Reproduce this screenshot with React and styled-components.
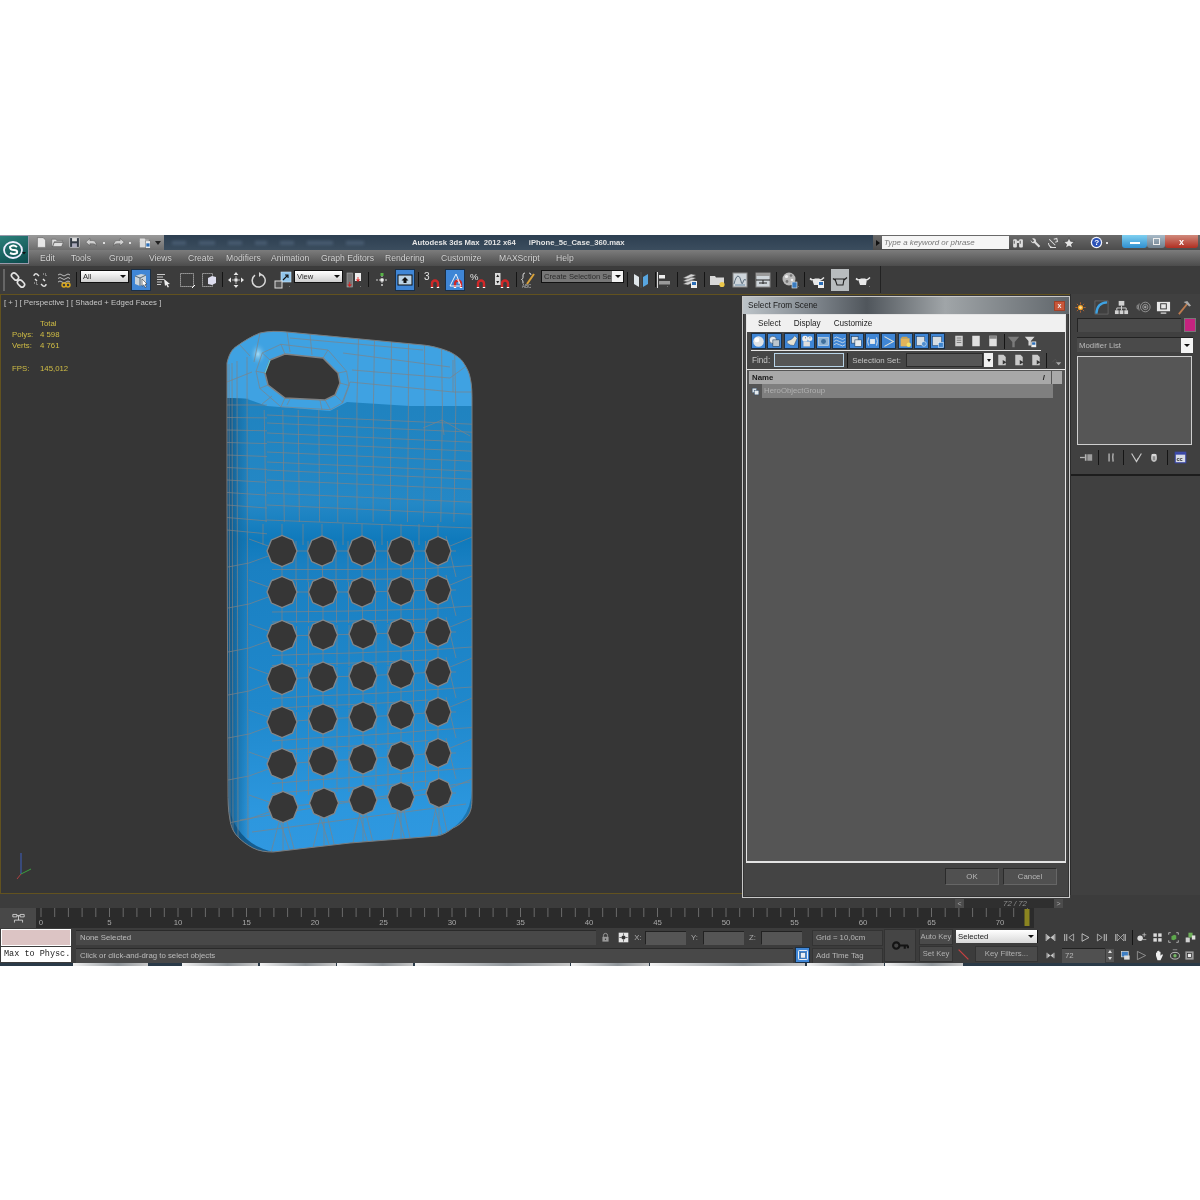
import React from "react";
import styled, { createGlobalStyle } from "styled-components";

const Global = createGlobalStyle`
  html, body { margin: 0; background: #fff; }
  * { box-sizing: border-box; }
`;
const UI = `"Liberation Sans", "Noto Sans", sans-serif`;

const Page = styled.div`
  width: 1200px; height: 1200px; padding-top: 235px; background: #fff; overflow: hidden;
  font-family: ${UI}; font-size: 7.8px; color: #c4c4c4; white-space: nowrap;
`;
const AppFrame = styled.div`
  position: relative; width: 1200px; height: 731px; display: flex; flex-direction: column; background: #3c3c3c;
  filter: blur(0.4px);
`;

/* ---------- icons ---------- */
const W = "#e4e4e4";
const magnet = <g fill="none"><path d="M8 15v-3.500a3 3 0 0 1 6 0V15" stroke="#d02828" strokeWidth="2.400" /><path d="M6.800 15.500h2.400M12.800 15.500h2.400" stroke="#fff" strokeWidth="1.200" /></g>;
const teapot = <g><path d="M3 7h9l-1 6H5z" fill="#e8e8e8" /><path d="M12 8l3-2.500M3 8L1 6.500" stroke="#e8e8e8" strokeWidth="1.600" fill="none" /><path d="M5.500 6.500h5" stroke="#999" /></g>;
const ICONS = {
  link: <g fill="none" stroke={W} strokeWidth="1.600"><rect x="1" y="2" width="8" height="5" rx="2.500" transform="rotate(45 5 4.500)" /><rect x="7" y="9" width="8" height="5" rx="2.500" transform="rotate(45 11 11.500)" /></g>,
  unlink: <g fill="none" stroke={W} strokeWidth="1.400"><path d="M2 4a2 2 0 0 1 3-2l2 2M5 9L3 7" /><path d="M14 12a2 2 0 0 1-3 2l-2-2M11 7l2 2" /><path d="M11 2h3v3M2 11h3v3" stroke="#999" strokeDasharray="1 1" /></g>,
  bind: <g fill="none"><path d="M2 3q2-2 4 0t4 0 4 0M2 6.500q2-2 4 0t4 0 4 0M2 10q2-2 4 0t4 0 4 0" stroke="#bbb" strokeWidth="1" /><circle cx="8" cy="13" r="2" stroke="#d8a820" strokeWidth="1.400" /><circle cx="12" cy="13" r="2" stroke="#d8a820" strokeWidth="1.400" /></g>,
  selObj: <g><path d="M2 4l6-2 5 1v8l-6 3-5-2z" fill="#c9d4dc" /><path d="M2 4l5 2 6-3M7 6v8" stroke="#4b5b66" strokeWidth=".9" fill="none" /><path d="M9 7l5 5-2 .3 1.400 2.700-1.300.6-1.300-2.700-1.600 1.400z" fill="#fff" stroke="#222" strokeWidth=".5" /></g>,
  selName: <g><path d="M1 2.500h8M1 5h6M1 7.500h7M1 10h5M1 12.500h4" stroke="#c9c9c9" strokeWidth="1.200" /><path d="M8 7l6 5-2.400.3 1.400 2.700-1.300.6-1.400-2.800L9 14z" fill="#eee" /></g>,
  rect: <g><rect x="1.500" y="1.500" width="13" height="13" fill="none" stroke="#bbb" strokeDasharray="1.200 .8" /><path d="M13 16l3-3" stroke="#fff" /></g>,
  win: <g><rect x="1.500" y="1.500" width="10" height="13" fill="none" stroke="#bbb" strokeDasharray="1.200 .8" /><path d="M7 6l4-2 4 1v6l-4 2-4-1z" fill="#dde" /></g>,
  move: <g fill="#e6e6e6"><path d="M8 0l2.400 3H5.600zM8 16l2.400-3H5.600zM0 8l3-2.400v4.800zM16 8l-3-2.400v4.800z" /><rect x="6.500" y="6.500" width="3" height="3" /><path d="M8 4v8M4 8h8" stroke="#e6e6e6" strokeWidth=".7" /></g>,
  rotate: <g fill="none" stroke="#d8d8d8" strokeWidth="1.500"><path d="M9.500 2.300A6.500 6.500 0 1 1 4 3.200" /><path d="M8 0v5L11 2.500z" fill="#d8d8d8" stroke="none" /></g>,
  scale: <g><rect x="6" y="0" width="10" height="10" fill="#8fc4ea" stroke="#cfe6f7" strokeWidth=".6" /><rect x="0" y="9" width="7" height="7" fill="#555" stroke="#ddd" /><path d="M8 8l5-5M10 3h3v3" stroke="#111" strokeWidth="1.100" fill="none" /></g>,
  pivot: <g><rect x="1" y="1" width="5.500" height="14" fill="#777" stroke="#aaa" strokeWidth=".6" /><rect x="9" y="1" width="6" height="8" fill="#eee" /><path d="M3.700 10v4M2 12.500l1.700 2 1.700-2M12 5v4M10.400 7.500l1.600 2 1.600-2" stroke="#e02020" fill="#e02020" strokeWidth=".8" /></g>,
  manip: <g><path d="M8 3v10M2 8h12" stroke="#ccc" strokeDasharray="2 1" /><rect x="6.500" y="1" width="3" height="3" fill="#59b548" /><rect x="6.500" y="6.500" width="3" height="3" fill="#eee" /><path d="M7 12h2v2H7z" fill="#aaa" /></g>,
  kb: <g><rect x="1" y="3" width="14" height="10" fill="#bcd4e6" stroke="#111" /><path d="M8 5l3.500 3.500H9.500V11h-3V8.500H4.500z" fill="#111" /></g>,
  snap3: <g>{magnet}<text x="0" y="8" fontSize="10" fill="#e4e4e4" fontFamily="Liberation Sans">3</text></g>,
  angle: <g>{magnet}<path d="M3 14L9 2l5 12H3" fill="none" stroke="#fff" strokeWidth=".9" /><path d="M9.500 7a6 6 0 0 1 2.500 5" stroke="#fff" fill="none" strokeWidth=".7" /></g>,
  pct: <g>{magnet}<text x="0" y="8" fontSize="9.500" fill="#e4e4e4" fontFamily="Liberation Sans">%</text></g>,
  spin: <g>{magnet}<rect x="1" y="1" width="5.500" height="12" fill="#dcdcdc" /><path d="M2.200 5l1.500-2.500L5.300 5zM2.200 9l1.500 2.500L5.300 9z" fill="#222" /></g>,
  named: <g fill="none" stroke="#d8d8d8"><path d="M5 1Q3 1 3 3v2.500Q3 7 1.500 7.500 3 8 3 10v1.500" /><path d="M9 1q2 0 2 2" /><path d="M7 12L14 2" stroke="#d9a23a" strokeWidth="2" /><text x="2" y="16" fontSize="4.500" fill="#bbb" stroke="none" fontFamily="Liberation Sans">ABC</text></g>,
  mirror: <g><path d="M1 2l5 3v10l-5-3z" fill="#dfe6ea" /><path d="M15 2l-5 3v10l5-3z" fill="#58a6e0" /><path d="M8 0v16" stroke="#555" /></g>,
  align: <g><path d="M1.500 0v16" stroke="#ddd" /><rect x="3" y="3" width="6" height="3.500" fill="#eee" /><rect x="3" y="9" width="11" height="3.500" fill="#9a9a9a" /></g>,
  layers: <g><path d="M1 6l8-4 5 1-8 4zM1 9l8-4 5 1-8 4zM1 12l8-4 5 1-8 4z" fill="#d6d6d6" stroke="#444" strokeWidth=".4" /><rect x="9" y="9" width="6" height="7" fill="#eee" /><rect x="10" y="10" width="4" height="3" fill="#2c6fb8" /></g>,
  folder: <g><path d="M1 4h5l1 1.500h8V13H1z" fill="#d8d8d8" /><circle cx="13" cy="12.500" r="2.600" fill="#ecc84a" /></g>,
  curve: <g><rect x="1" y="1" width="14" height="14" fill="#cfd6db" stroke="#888" /><path d="M2 12q2-8 4-8t3 5 2 1 3-2" stroke="#5b6d7c" fill="none" /><path d="M3 13h10" stroke="#6c8ca6" /></g>,
  schem: <g><rect x="1" y="1" width="14" height="14" fill="#cfd6db" stroke="#888" /><rect x="1" y="1" width="14" height="3" fill="#9a9a9a" /><path d="M1 8h14M4 11h8M8 8v4" stroke="#222" /></g>,
  mat: <g><circle cx="7" cy="7" r="6.500" fill="#b9b9b9" /><circle cx="4.500" cy="4.500" r="1.600" fill="#eee" /><circle cx="9" cy="3.500" r="1.300" fill="#777" /><circle cx="10" cy="8" r="1.300" fill="#eee" /><circle cx="5" cy="9.500" r="1.400" fill="#777" /><rect x="10" y="10" width="5" height="6" fill="#3a7cc0" stroke="#eee" strokeWidth=".6" /></g>,
  rsetup: <g>{teapot}<rect x="9" y="9" width="6" height="7" fill="#eee" /><rect x="10" y="10" width="4" height="3" fill="#2c6fb8" /></g>,
  pot: teapot,
  potDark: <g><path d="M3 7h9l-1 6H5z" fill="none" stroke="#222" strokeWidth="1.100" /><path d="M12 8l3-2.500M3 8L1 6.500" stroke="#222" strokeWidth="1.300" fill="none" /></g>,
  qnew: <path d="M3 2h7l3 3v9H3z" fill="#e6e6e6" stroke="#555" strokeWidth=".6" />,
  qopen: <path d="M1 4h5l1 1.500h7V7H4l-2 6H1zM4 8h11l-2 5H2z" fill="#ddd" stroke="#444" strokeWidth=".5" />,
  qsave: <g><rect x="2" y="2" width="12" height="12" rx="1" fill="#333a44" stroke="#d0d0d0" /><rect x="5" y="2.500" width="6" height="4" fill="#e0e0e0" /><rect x="5" y="9" width="6" height="5" fill="#aab" /></g>,
  qundo: <path d="M6 3L1 7.500 6 12V9.500h4q3 0 4 3 0-7-5-7H6z" fill="#cfcfcf" stroke="#444" strokeWidth=".5" />,
  qredo: <path d="M10 3l5 4.500L10 12V9.500H6q-3 0-4 3 0-7 5-7h3z" fill="#cfcfcf" stroke="#444" strokeWidth=".5" />,
  qproj: <g><path d="M1 3h6l1 1.500h4V7H1z" fill="#ddd" /><rect x="1" y="6" width="9" height="8" fill="#d8d8d8" /><rect x="8" y="6" width="6" height="9" fill="#eee" stroke="#444" strokeWidth=".5" /><rect x="9" y="9" width="4" height="4" fill="#2c6fb8" /></g>,
  bino: <g fill="#dedede"><rect x="1.500" y="3" width="5" height="11" rx="1.500" /><rect x="9.500" y="3" width="5" height="11" rx="1.500" /><rect x="6" y="5" width="4" height="3" /><path d="M3 5v4M11 5v4" stroke="#333" /></g>,
  wrench: <path d="M2 4l3 3 2-2-3-3q4-1.500 5 1.500t0 2.500l6 6-2 2-6-6Q3 9 2 4z" fill="#dcdcdc" />,
  sat: <g fill="none" stroke="#ddd" strokeWidth="1.400"><path d="M3 3l8 8M2 8a6 6 0 0 0 7 6" /><path d="M9 3l4-1 1 4-3 1" /><path d="M4 14h8" /></g>,
  star: <path d="M8 1l2.100 4.700 5 .5-3.800 3.300 1.100 5L8 12l-4.400 2.500 1.100-5L.9 6.200l5-.5z" fill="#e4e4e4" stroke="#333" strokeWidth=".8" />,
  help: <g><circle cx="8" cy="8" r="7" fill="#f4f6fb" /><circle cx="8" cy="8" r="5.500" fill="#2b52b8" /><text x="5.300" y="11.500" fontSize="10" fontWeight="700" fill="#fff" fontFamily="Liberation Sans">?</text></g>,
  ball: <g><circle cx="8" cy="8" r="6.500" fill="#dfe3e6" /><circle cx="6" cy="6" r="3" fill="#fff" /></g>,
  dShape: <g><circle cx="6" cy="6" r="4.500" fill="#e6eaee" stroke="#1b3a5c" strokeWidth=".7" /><rect x="6" y="6" width="8" height="8" fill="#bcc6ce" stroke="#1b3a5c" strokeWidth=".7" /></g>,
  dLight: <path d="M12 1l3 3-4 9q-5 0-8-3-1-1 0-3 5 0 9-6z" fill="#e6e3d4" stroke="#1b3a5c" strokeWidth=".5" />,
  dCam: <g><circle cx="5" cy="4.500" r="3.500" fill="#eee" /><circle cx="11" cy="4.500" r="3" fill="#eee" /><rect x="3" y="8" width="8" height="6" fill="#dedede" /><path d="M5 3.500h1M10.500 3.500h1" stroke="#123" /></g>,
  dHelper: <g><rect x="2" y="3" width="12" height="10" fill="#8fb3d4" stroke="#d6dde2" strokeWidth=".8" /><circle cx="8" cy="8" r="3" fill="#3f6f9c" /></g>,
  dWave: <path d="M1 4q3-3 7 0t7 0M1 8q3-3 7 0t7 0M1 12q3-3 7 0t7 0" fill="none" stroke="#d7e0e6" strokeWidth="1" />,
  dGroup: <g><rect x="2" y="2" width="8" height="8" fill="#d6dde2" stroke="#1b3a5c" strokeWidth=".7" /><rect x="6" y="6" width="8" height="8" fill="#e6ebee" stroke="#1b3a5c" strokeWidth=".7" /></g>,
  dXref: <g><path d="M3 3q-2 5 0 10M13 3q2 5 0 10" fill="none" stroke="#d6dde2" strokeWidth="1.200" /><rect x="5" y="5" width="6" height="6" fill="#e6ebee" /></g>,
  dBone: <path d="M3 2l11 6-11 6" fill="none" stroke="#e2e2d8" strokeWidth="1.300" />,
  dCont: <g><rect x="2" y="4" width="11" height="10" fill="#e3b45a" /><circle cx="12" cy="12" r="2.700" fill="#f2e06a" /><path d="M2 4l2-2h6l1 2" fill="#cfa24a" /></g>,
  dFolderB: <g><rect x="2" y="2" width="10" height="11" fill="#d6dde2" stroke="#1b3a5c" strokeWidth=".6" /><circle cx="11" cy="11" r="3" fill="#4e8dcf" stroke="#fff" strokeWidth=".6" /></g>,
  dFrame: <g><rect x="2" y="2" width="11" height="11" fill="#d6dde2" stroke="#1b3a5c" strokeWidth=".6" /><rect x="9" y="9" width="6" height="6" fill="#3f86cf" stroke="#fff" strokeWidth=".6" /></g>,
  page1: <g><rect x="3" y="1" width="10" height="14" fill="#cfcfcf" /><path d="M5 4h6M5 7h6M5 10h6" stroke="#666" /></g>,
  page2: <rect x="3" y="1" width="10" height="14" fill="#e0e0e0" />,
  page3: <g><rect x="3" y="1" width="10" height="14" fill="#e0e0e0" /><rect x="3" y="1" width="10" height="4" fill="#888" /></g>,
  funnel: <path d="M1 2h14L9.500 8.500V15h-3V8.500z" fill="#7b7b7b" />,
  funnel2: <g><path d="M1 2h12L8.500 7.500V13h-3V7.500z" fill="#d8d8d8" /><rect x="9" y="8" width="6" height="7" fill="#eee" /><rect x="10" y="9" width="4" height="3" fill="#2c6fb8" /></g>,
  sel1: <g><path d="M3 1h7l3 3v11H3z" fill="#c9c9c9" /><path d="M9 8l5 3-5 3z" fill="#333" /></g>,
  ddSmall: <g><path d="M3 11l4-4 2 2-2 4" stroke="#555" fill="none" /><path d="M8 11h7l-3.500 4z" fill="#aaa" /></g>,
  sun: <g><circle cx="8" cy="8" r="3.800" fill="#f0a020" /><circle cx="8" cy="8" r="2" fill="#fbe09a" /><path d="M8 .5v3M8 12.500v3M.5 8h3M12.500 8h3M2.700 2.700l2 2M11.300 11.300l2 2M2.700 13.300l2-2M11.300 4.700l2-2" stroke="#e0702a" /></g>,
  tCurve: <g><rect x="1" y="1" width="14" height="14" fill="none" stroke="#777" strokeWidth=".6" /><path d="M2.500 14.500Q3 3 14 2.500" fill="none" stroke="#3fa3e3" strokeWidth="2.400" /></g>,
  tTree: <g fill="#d2d2d2"><rect x="5" y="1" width="6" height="5" /><rect x="1" y="11" width="4" height="4" /><rect x="6" y="11" width="4" height="4" /><rect x="11" y="11" width="4" height="4" /><path d="M3 11V8.500h10V11M8 6v5" stroke="#d2d2d2" fill="none" /></g>,
  tMotion: <g fill="none" stroke="#9c9c9c"><circle cx="9.500" cy="8" r="5.500" /><circle cx="9.500" cy="8" r="3" /><circle cx="9.500" cy="8" r="1" fill="#ccc" /><path d="M2.500 4q-2 4 0 8M.5 5.500q-1 2.500 0 5" /></g>,
  tDisp: <g><rect x="1" y="2" width="14" height="10" fill="#e8e8e8" /><rect x="5" y="4" width="6" height="5.500" fill="none" stroke="#333" /><path d="M5 14h6" stroke="#ccc" strokeWidth="1.500" /></g>,
  tHammer: <g><path d="M2 15L11 4" stroke="#bc7a4e" strokeWidth="2" /><path d="M7 2l4-1 4 5-2 1-3-3z" fill="#a9a9a9" /></g>,
  pin: <g fill="#b4b4b4"><path d="M0 8h6" stroke="#b4b4b4" strokeWidth="1.600" /><rect x="6" y="4" width="2" height="8" /><rect x="9" y="4" width="6" height="8" opacity=".8" /></g>,
  bars: <g stroke="#bbb" strokeWidth="1.600" fill="none"><path d="M5 3v10M10 3q-1 5 0 10" /></g>,
  vee: <path d="M2 3l6 10 6-10M8 13l2-4" fill="none" stroke="#c8c8c8" strokeWidth="1.400" />,
  hand2: <g><ellipse cx="8" cy="9" rx="4" ry="5.500" fill="#bdbdbd" /><path d="M5 4h6v3H5z" fill="#d8d8d8" /><path d="M8 7v5" stroke="#444" /></g>,
  cfg: <g><rect x="1.500" y="1.500" width="13" height="13" fill="#d8dce6" stroke="#3846a8" strokeWidth="1.300" /><rect x="1.500" y="1.500" width="13" height="3" fill="#3846a8" /><text x="3" y="12" fontSize="7" fontWeight="700" fill="#222" fontFamily="Liberation Sans">cc</text></g>,
  tl: <g fill="none" stroke="#ddd"><path d="M1 3h5v3H1zM10 3h5v3h-5zM6 4.500h4M8 4.500V10M3 10h10M3 10v3M13 10v3" /></g>,
  lock: <g><path d="M5 7V5a3 3 0 0 1 6 0v2" fill="none" stroke="#999" strokeWidth="1.400" /><rect x="3.500" y="7" width="9" height="7" fill="#999" /><circle cx="8" cy="10.500" r="1" fill="#333" /></g>,
  abs: <g><rect x="1" y="1" width="14" height="14" fill="#e6e6e6" /><circle cx="8" cy="8" r="3" fill="#333" /><path d="M8 2v3M8 11v3M2 8h3M11 8h3" stroke="#333" /></g>,
  timeTag: <g><rect x="2" y="2" width="12" height="12" rx="1" fill="none" stroke="#f2f2f2" strokeWidth="1.300" /><rect x="5" y="5" width="6" height="7" fill="#e8eef4" stroke="#30587e" strokeWidth=".6" /></g>,
  key: <g fill="none" stroke="#141414"><circle cx="4" cy="8" r="3" strokeWidth="2" /><path d="M7 8h8M12 8v3M15 8v2.500" strokeWidth="2" /></g>,
  keyRed: <path d="M2 2l12 12" stroke="#c84040" strokeWidth="1.500" />,
  pStart: <g fill="#c4c4c4"><path d="M1 3h1.500v10H1zM15 3h-1.500v10H15zM8 8l5-4v8zM8 8L3 4v8z" /></g>,
  pPrev: <g fill="none" stroke="#d0d0d0"><path d="M1 3v10M4 3v10" strokeWidth="1.300" /><path d="M14 3L7 8l7 5z" /></g>,
  pPlay: <path d="M3 2.500L13 8 3 13.500z" fill="none" stroke="#d0d0d0" strokeWidth="1.200" />,
  pNext: <g fill="none" stroke="#d0d0d0"><path d="M15 3v10M12 3v10" strokeWidth="1.300" /><path d="M2 3l7 5-7 5z" /></g>,
  pEnd: <g fill="none" stroke="#c4c4c4"><path d="M1 3v10M15 3v10" strokeWidth="1.300" /><path d="M3 3l5 5-5 5zM8 8l5-5v10z" /></g>,
  vZoom: <g><circle cx="6" cy="9" r="4" fill="#dcdcdc" /><path d="M12 1v6M9 4h6M10 11h5" stroke="#ccc" /></g>,
  vGrid: <g fill="#dcdcdc"><rect x="2" y="2" width="5" height="5" /><rect x="9" y="2" width="5" height="5" /><rect x="2" y="9" width="5" height="5" /><rect x="9" y="9" width="5" height="5" /></g>,
  vZoomE: <g><path d="M1 4V1h3M12 1h3v3M1 12v3h3M12 15h3v-3" stroke="#ddd" fill="none" /><path d="M5 6l4-2 3 1v5l-4 2-3-1z" fill="#5da84c" /></g>,
  vZoomA: <g><rect x="1" y="8" width="6" height="7" fill="#d0d0d0" /><rect x="5" y="1" width="6" height="7" fill="#6fb05a" /><rect x="10" y="5" width="5" height="6" fill="#e0e0e0" /></g>,
  vFrame: <g><rect x="2" y="2" width="10" height="8" fill="#3d7ec4" stroke="#ddd" /><rect x="6" y="8" width="8" height="6" fill="#ddd" /></g>,
  vFov: <path d="M2 2l12 6-12 6z" fill="none" stroke="#9c9c9c" strokeWidth="1.200" />,
  vHand: <path d="M4 9V5q1-1 1.500 0V3q1-1 1.500 0v-.5q1-1 1.500 0V4q1-1 1.500 0v5l2-2q1.500 0 1 1.500L10 15H6z" fill="#efefef" />,
  vOrbit: <g fill="none" stroke="#ddd"><ellipse cx="8" cy="9" rx="6" ry="4.500" /><circle cx="8" cy="9" r="2.200" fill="#74b664" stroke="none" /><path d="M5 1h6" stroke="#aaa" /></g>,
  vMax: <g><rect x="2" y="2" width="12" height="12" fill="#9c9c9c" /><rect x="5" y="5" width="6" height="6" fill="#eee" stroke="#222" /></g>,
  tiny: <path d="M0 4L4 0" stroke="#fff" strokeWidth="1.200" />,
};
const Glyph = styled.svg`display: block; flex: none; overflow: visible;`;
const Ico = ({ n, s = 16 }) => <Glyph width={s} height={s} viewBox="0 0 16 16">{ICONS[n]}</Glyph>;

/* ---------- title bar ---------- */
const Logo = styled.div`
  position: absolute; left: 0; top: 0; width: 29px; height: 29px; z-index: 2;
  background: linear-gradient(160deg, #2c7f7a, #0b4b4c); border: 1px solid #99a; border-width: 1px 1px 1px 0;
  display: flex; align-items: center; justify-content: center;
`;
const TitleBar = styled.div`display: flex; height: 15px; background: #2f4050; padding-left: 29px;`;
const Quick = styled.div`
  width: 135px; flex: none; display: flex; align-items: center; background: linear-gradient(#9a9a9a, #6d6d6d);
`;
const QSlot = styled.div`width: ${p => p.$w}px; margin-left: ${p => p.$ml || 0}px; display: flex; justify-content: center; flex: none;`;
const QDot = styled.span`width: 2px; height: 2px; background: #ddd; margin: 0 5px 0 3px; flex: none;`;
const QDown = styled.span`width: 0; height: 0; border: 3px solid transparent; border-top: 4px solid #222; border-bottom: 0; margin-left: 3px;`;
const TitleMid = styled.div`
  flex: 1; display: flex; align-items: center; color: #e4e4e4; font-weight: 700; font-size: 7.7px;
  background: linear-gradient(#2d3f51, #3b4d5e);
`;
const Smudges = styled.div`display: flex; gap: 13px; width: 248px; padding-left: 8px; flex: none;`;
const Smudge = styled.span`display: block; height: 4px; width: ${p => p.$w}px; background: #485b70; filter: blur(1.5px);`;
const TitleFile = styled.span`margin-left: 13px;`;
const SearchZone = styled.div`
  width: 327px; flex: none; display: flex; align-items: center; background: linear-gradient(#6a6a6a, #4c4c4c);
`;
const Tri = styled.span`flex: none; width: 0; height: 0; border: 3px solid transparent; border-left: 4px solid #111; border-right: 0; margin: 0 2px 0 3px;`;
const Search = styled.div`
  width: 127px; height: 13px; flex: none; background: #f5f5f5; color: #777; font-style: italic; font-size: 7.9px; line-height: 13px; padding-left: 2px;
`;
const SIcon = styled.div`flex: none; width: ${p => p.$w}px; margin-left: ${p => p.$ml || 0}px; display: flex; justify-content: center;`;
const WinBtns = styled.div`width: 78px; display: flex; height: 15px; margin-left: auto; flex: none;`;
const WinBtn = styled.div`
  width: ${p => p.$w}px; height: 13px; flex: none; display: flex; align-items: center; justify-content: center;
  color: #fff; font-weight: 700; font-size: 9px; border-radius: 0 0 3px 3px;
  background: ${p => p.$bg};
`;
const MinBar = styled.span`display: block; width: 10px; height: 2px; background: #fff; margin-top: 3px;`;
const MaxBox = styled.span`display: block; width: 7px; height: 7px; border: 1px solid #eee;`;

/* ---------- menu ---------- */
const MenuBar = styled.div`
  height: 16px; display: flex; align-items: center; padding-left: 40px; color: #d8d8d8; font-size: 8.6px;
  background: linear-gradient(#7c7c7c, #4c4c4c); text-shadow: 0 0 1px #333;
`;
const MenuItem = styled.span`width: ${p => p.$w}px; flex: none;`;

/* ---------- toolbar ---------- */
const ToolBar = styled.div`height: 28px; flex: none; display: flex; background: #3c3c3c;`;
const ToolInner = styled.div`
  width: 881px; height: 27px; display: flex; align-items: center; border-right: 1px solid #222;
`;
const Slot = styled.div`
  flex: none; width: ${p => p.$w}px; margin-left: ${p => p.$ml || 0}px; height: 22px; position: relative;
  display: flex; align-items: center; justify-content: center;
  background: ${p => (p.$on === "blue" ? "#3f86d6" : p.$on === "light" ? "#b8bcbe" : "transparent")};
  border: ${p => (p.$on === "blue" ? "1px solid #1b2f45" : "0")};
`;
const Corner = styled.span`position: absolute; right: 1px; bottom: 1px; width: 4px; height: 4px; display: block;`;
const Sep = styled.span`flex: none; width: 1px; height: 15px; background: #151515; margin-left: ${p => p.$ml || 0}px;`;
const Grip = styled(Sep)`height: 22px; width: 2px; background: #666;`;
const Combo = styled.div`
  flex: none; width: ${p => p.$w}px; margin-left: ${p => p.$ml || 0}px; height: 13px; display: flex; align-items: center;
  border: 1px solid #111; color: #2a2a2a; padding-left: 2px; font-size: 7.6px;
  background: ${p => (p.$dark ? "#777" : "linear-gradient(#fff, #cfcfcf)")}; position: relative;
  align-self: flex-start; margin-top: 4px;
`;
const ComboArrow = styled.span`
  position: absolute; right: 0; top: 0; bottom: 0; width: 11px; background: ${p => (p.$dark ? "#f2f2f2" : "transparent")};
  display: flex; align-items: center; justify-content: center;
  &::after { content: ""; border: 3px solid transparent; border-top: 3px solid #111; border-bottom: 0; }
`;

/* ---------- main ---------- */
const Main = styled.div`height: 601px; flex: none; display: flex; background: #3c3c3c;`;
const Viewport = styled.div`
  position: relative; width: 1070px; height: 600px; flex: none; background: #363636; border: 1px solid #62521f; border-right: 0;
`;
const Scene = styled.svg`position: absolute; left: -1px; top: -1px;`;
const VpLabel = styled.div`position: absolute; left: 3px; top: 3px; color: #c8c8c8;`;
const Stats = styled.div`
  position: absolute; left: 11px; top: 24px; display: grid; grid-template-columns: 28px auto; row-gap: 2px; color: #d0bd45; line-height: 9px;
`;
const StatGap = styled.div`grid-column: 1 / 3; height: 10px;`;

/* ---------- dialog ---------- */
const Dialog = styled.div`
  position: absolute; right: 0; top: 1px; width: 328px; height: 602px; z-index: 3; display: flex; flex-direction: column;
  border: 1px solid #c8c8c8; background: #444; box-shadow: inset 0 0 0 1px #333;
`;
const DTitle = styled.div`
  height: 17px; flex: none; display: flex; align-items: center; justify-content: space-between; padding: 0 4px 0 5px; color: #1a1a1a; font-size: 8.2px;
  background: linear-gradient(90deg, #bcc3c8, #8a9198 18%, #50565c 38%, #a0a5a8 62%, #60666b 100%);
`;
const DClose = styled.span`
  width: 11px; height: 10px; background: #c8563a; border: 1px solid #a04028; color: #f0f0f0; font-size: 7px; line-height: 8px; text-align: center; font-weight: 700;
`;
const DBody = styled.div`
  flex: 1; display: flex; flex-direction: column; margin: 0 3px 3px; min-height: 0;
`;
const DFrame = styled.div`
  flex: 1; display: flex; flex-direction: column; border: 1px solid #e4e4e4; border-bottom-width: 2px; background: #555; min-height: 0;
`;
const DMenu = styled.div`height: 17px; flex: none; background: #f0f0f0; display: flex; align-items: center; padding-left: 11px; color: #222; font-size: 8.2px; gap: 13px;`;
const DToolRow = styled.div`height: 19px; flex: none; background: #464646; padding-left: 4px; display: flex; align-items: center;`;
const DToolLine = styled.div`width: 290px; height: 19px; display: flex; align-items: center; border-bottom: 1px solid #e8e8e8;`;
const DBlue = styled.div`
  width: 15px; height: 16px; margin-right: 1.3px; background: #3f86d6; border: 1px solid #1b2f45; flex: none; display: flex; align-items: center; justify-content: center;
`;
const DPlain = styled.div`width: 16px; margin-left: ${p => p.$ml || 0}px; flex: none; display: flex; justify-content: center;`;
const DFind = styled.div`height: 19px; flex: none; background: #464646; display: flex; align-items: center; padding-left: 5px; color: #c4c4c4; border-bottom: 1px solid #e8e8e8; font-size: 8.2px;`;
const DSetLabel = styled.span`margin-left: 4px; width: 51px; flex: none; font-size: 7.9px;`;
const DInput = styled.div`width: ${p => p.$w}px; height: 14px; flex: none; background: #555; margin-left: ${p => p.$ml || 0}px; border: 1px solid ${p => p.$edge || "#2a2a2a"};`;
const DArrow = styled.div`
  width: 9px; height: 14px; background: #f0f0f0; margin-left: 1px; display: flex; align-items: center; justify-content: center; flex: none;
  &::after { content: ""; border: 2.5px solid transparent; border-top: 3px solid #111; border-bottom: 0; }
`;
const DHead = styled.div`flex: none; height: 13px; margin-top: 1px; display: flex; background: #555; padding-left: 2px;`;
const DName = styled.div`width: 302px; background: #a8a8a8; color: #1a1a1a; font-weight: 700; font-size: 7.8px; line-height: 14px; padding-left: 3px; display: flex; justify-content: space-between; padding-right: 6px;`;
const DHeadEnd = styled.div`width: 10px; margin-left: 1px; background: #a8a8a8;`;
const DRow = styled.div`flex: none; height: 14px; display: flex; align-items: center; padding-left: 4px;`;
const DRowSel = styled.div`width: 291px; height: 14px; margin-left: 2px; background: #7f7f7f; color: #b0b0b0; padding-left: 2px; line-height: 14px;`;
const DFill = styled.div`flex: 1;`;
const DFoot = styled.div`height: 31px; flex: none; background: #444; display: flex; justify-content: flex-end; align-items: center; gap: 4px; padding: 0 9px 4px 0;`;
const DBtn = styled.div`
  width: 54px; height: 17px; background: #505050; border: 1px solid #2b2b2b; border-right-color: #666; border-bottom-color: #666; color: #b8b8b8; text-align: center; line-height: 15px;
`;

/* ---------- command panel ---------- */
const Panel = styled.div`flex: 1; background: #404040; padding: 0 7px 0 6px; display: flex; flex-direction: column; border-left: 1px solid #2c2c2c;`;
const Tabs = styled.div`height: 22px; margin-top: 2px; display: flex; align-items: center; margin-right: -7px;`;
const Tab = styled.div`width: ${p => p.$w}px; margin-left: ${p => p.$ml || 0}px; flex: none; display: flex; justify-content: center;`;
const NameRow = styled.div`display: flex; gap: 3px; height: 14px; margin-right: -3px;`;
const NameField = styled.div`width: 104px; height: 14px; background: #4a4a4a; border: 1px solid #242424; border-width: 1px 0 0 1px;`;
const Swatch = styled.div`width: 12px; height: 14px; background: #c4237f; border: 1px solid #777;`;
const ModList = styled.div`
  margin-top: 5px; height: 15px; width: 116px; display: flex; align-items: center; justify-content: space-between; background: #4a4a4a; border-top: 1px solid #222; color: #bcbcbc; padding-left: 2px;
`;
const ModBtn = styled.span`
  width: 12px; height: 15px; background: #f4f4f4; display: flex; align-items: center; justify-content: center;
  &::after { content: ""; border: 3px solid transparent; border-top: 3px solid #111; border-bottom: 0; }
`;
const Stack = styled.div`margin-top: 4px; width: 115px; height: 89px; background: #565656; border: 1px solid #cfcfcf;`;
const StackTools = styled.div`height: 24px; display: flex; align-items: center;`;
const PanelRule = styled.div`height: 2px; background: #1d1d1d; margin: 5px -7px 0 -6px;`;

/* ---------- timeline ---------- */
const SliderRow = styled.div`height: 13px; flex: none; background: #3c3c3c; display: flex; justify-content: flex-end; padding: 4px 137px 0 0;`;
const Slider = styled.div`width: 108px; height: 9px; display: flex; color: #8e8e8e; line-height: 9px; text-align: center;`;
const SlideEnd = styled.span`width: 9px; background: #4c4c4c; color: #aaa; font-size: 7px;`;
const SlideMid = styled.span`flex: 1; background: #2f2f2f; font-style: italic; padding-left: 12px;`;
const RulerRow = styled.div`height: 20px; flex: none; display: flex; background: #3c3c3c;`;
const RulerIcon = styled.div`width: 36px; flex: none; background: #484848; display: flex; align-items: center; justify-content: center;`;

/* ---------- status ---------- */
const StatusRow = styled.div`height: 35px; flex: none; display: flex; background: #3c3c3c;`;
const MaxCol = styled.div`width: 72px; flex: none; display: flex; flex-direction: column; padding: 1px 1px 0 1px; gap: 1px;`;
const Pink = styled.div`height: 17px; background: #dcc4c4; border: 1px solid #fff;`;
const MaxScript = styled.div`height: 15px; background: #fff; color: #222; font-family: "Liberation Mono", monospace; font-size: 8.5px; line-height: 14px; padding-left: 3px; overflow: hidden;`;
const StatusMain = styled.div`width: 734px; margin-left: 4px; flex: none; display: flex; flex-direction: column; gap: 2px; padding-top: 2px;`;
const SLine = styled.div`display: flex; align-items: center; height: 16px;`;
const Field = styled.div`
  width: ${p => p.$w}px; height: 15px; flex: none; background: #484848; border-top: 1px solid #2a2a2a; line-height: 14px; padding-left: 4px; color: #bdbdbd;
`;
const Coord = styled.div`width: ${p => p.$w}px; flex: none; margin-left: ${p => p.$ml || 0}px; display: flex; justify-content: center; color: #aaa;`;
const CoordInput = styled.div`width: 41px; height: 14px; flex: none; background: #555; border: 1px solid #222; border-right: 0; border-bottom-color: #555;`;
const BlueBtn = styled.div`width: 15px; height: 16px; margin-left: 2px; background: #3f86d6; border: 1px solid #1b2f45; flex: none; display: flex; align-items: center; justify-content: center;`;
const TimeCol = styled.div`width: 71px; margin-left: 2px; flex: none; display: flex; flex-direction: column; gap: 2px; padding-top: 2px;`;
const TimeCell = styled.div`height: 16px; background: #454545; border: 1px solid #333; color: #b8b8b8; line-height: 14px; padding-left: 3px;`;
const KeyBox = styled.div`width: 32px; margin: 1px 0 0 1px; height: 33px; flex: none; background: #454545; border: 1px solid #333; display: flex; align-items: center; justify-content: center;`;
const AutoCol = styled.div`width: 34px; margin-left: 3px; flex: none; display: flex; flex-direction: column; gap: 1px; padding-top: 1px;`;
const AutoBtn = styled.div`height: 16px; background: #4a4a4a; border: 1px solid #333; color: #b0b0b0; text-align: center; line-height: 14px; font-size: 7.6px;`;
const SelCol = styled.div`width: 82px; margin-left: 3px; flex: none; display: flex; flex-direction: column; padding-top: 2px; gap: 3px;`;
const SelBox = styled.div`height: 13px; background: linear-gradient(#fff, #d8d8d8); color: #222; line-height: 13px; padding-left: 2px; display: flex; justify-content: space-between; align-items: center; border: 1px solid #111; border-width: 0 1px 0 0; padding-right: 3px;
  &::after { content: ""; border: 3px solid transparent; border-top: 3px solid #111; border-bottom: 0; }`;
const FilterRow = styled.div`display: flex; align-items: center; height: 16px;`;
const KeyFilters = styled.div`margin-left: 5px; width: 63px; height: 16px; background: #4a4a4a; border: 1px solid #333; color: #b0b0b0; text-align: center; line-height: 14px;`;
const PlayCol = styled.div`flex: 1; display: flex; flex-direction: column; padding-top: 1px; gap: 2px; padding-left: 3px;`;
const PlayRow = styled.div`display: flex; align-items: center; height: 16px;`;
const PSlot = styled.div`width: ${p => p.$w}px; flex: none; margin-left: ${p => p.$ml || 0}px; display: flex; justify-content: center;`;
const FrameInput = styled.div`width: 43px; margin-left: 3px; height: 15px; background: #505050; border-top: 1px solid #222; color: #b8b8b8; padding-left: 3px; line-height: 14px; flex: none;`;
const Spin = styled.div`width: 8px; height: 13px; margin-left: 1px; background: #555; flex: none; display: flex; flex-direction: column; align-items: center; justify-content: space-around;
  &::before { content: ""; border: 2px solid transparent; border-bottom: 3px solid #ddd; border-top: 0; }
  &::after { content: ""; border: 2px solid transparent; border-top: 3px solid #ddd; border-bottom: 0; }`;

/* ---------- taskbar remnant ---------- */
const Task = styled.div`height: 3px; flex: none; display: flex; background: #2a3a48;`;
const TaskSeg = styled.span`width: ${p => p.$w}px; margin-left: ${p => p.$ml || 0}px; flex: none; background: linear-gradient(90deg, #f2f2f2, #8f959a 60%, #c8c8c8);`;

/* ---------- phone mesh ---------- */
const HOLES = [
  [[282, 551], [322, 551], [362, 551], [401, 551], [438, 551]],
  [[282, 592], [323, 592], [362, 592], [401, 591], [438, 590]],
  [[282, 636], [323, 635], [363, 634], [401, 633], [438, 632]],
  [[282, 679], [323, 677], [363, 676], [401, 674], [438, 672]],
  [[282, 722], [323, 719], [363, 717], [401, 715], [438, 712]],
  [[282, 764], [323, 761], [363, 759], [401, 756], [438, 753]],
  [[283, 807], [324, 803], [363, 800], [401, 797], [439, 793]],
];
const RX = [15, 14.5, 14, 13.5, 13];
const RY = [15.5, 15, 15, 14.5, 14.5];
const octa = (cx, cy, rx, ry) => Array.from({ length: 8 }, (_, k) => {
  const a = (k * Math.PI) / 4;
  return `${(cx + rx * Math.cos(a)).toFixed(1)},${(cy + ry * Math.sin(a)).toFixed(1)}`;
}).join(" ");
const OUTLINE = "M227 363C229 354 232 349 237 346C244 341 252 336 260 333C268 331 278 331 287 332L423 345C433 346 443 349 450 352C456 355 461 359 463 362C467 368 469 372 470 377C472 385 472 394 472 403L472 797C472 807 471 812 467 817C463 822 458 826 453 828C448 832 443 835 437 836L350 843L273 852C266 852 259 851 253 848C247 845 242 841 238 837C233 832 231 826 230 820C228 810 228 800 228 790L227 500Z";
const BAND = "M220 398L247 399L267 406L330 411L347 402L410 406L480 406L480 320L220 320Z";
const CAM = [[270, 360], [285, 354], [323, 358], [338, 373], [340, 383], [335, 395], [325, 400], [285, 398], [268, 385], [265, 373]];
const camPts = CAM.map(p => p.join(",")).join(" ");
const camRim = CAM.map(([x, y]) => [302 + (x - 302) * 1.24, 377 + (y - 377) * 1.42]);

const mesh = (() => {
  const L = [];
  const add = (a, b, c, d) => L.push(`M${a.toFixed(1)} ${b.toFixed(1)}L${c.toFixed(1)} ${d.toFixed(1)}`);
  const topY = x => 332 + (x - 287) * 0.0956;
  const VX = [267, 285, 300, 320, 338, 357, 373, 390, 407, 423, 440, 453];
  VX.forEach((x, i) => {
    const bend = (x - 360) * 0.01;
    add(x + bend * 3, i < 5 ? 410 : 406, x + bend, 522);
    if (x > 345) add(x + 1.5, topY(x), x + bend * 3, 406);
  });
  [229, 232, 237, 247].forEach(x => add(x, 365 - (x - 227) * 0.4, x + 1, 838));
  [415, 423, 433, 442, 452, 462, 470, 480, 493, 505].forEach(y => add(267, y, 472, y + 205 * 0.045));
  add(267, 520, 472, 528);
  for (let y = 405; y < 535; y += 12.5) add(227, y, 267, y + (y - 405) * 0.03);
  [[350, 382, 453, 392], [352, 370, 450, 378], [343, 353, 450, 367], [290, 338, 423, 350], [453, 392, 472, 392]].forEach(l => add(...l));
  add(453, 392, 453, 360); add(450, 378, 465, 367); add(350, 382, 342, 403);
  add(423, 428, 442, 420); add(442, 420, 444, 435); add(442, 420, 470, 436);
  camRim.forEach((p, i) => {
    const q = camRim[(i + 1) % camRim.length];
    add(p[0], p[1], q[0], q[1]);
    add(p[0], p[1], CAM[i][0], CAM[i][1]);
  });
  add(260, 333, 254, 362); add(240, 345, 250, 356); add(227, 382, 252, 372); add(287, 332, 290, 352); add(310, 334, 312, 355);
  add(262, 404, 272, 396); add(287, 405, 290, 399); add(322, 410, 320, 400);
  const rows = HOLES.length;
  HOLES.forEach((row, r) => row.forEach(([x, y], c) => {
    if (c < 4) {
      const [nx, ny] = row[c + 1];
      add(x, y, nx, ny);
      const mx = (x + nx) / 2;
      if (r < rows - 1) {
        const [dx, dy] = HOLES[r + 1][c];
        add(x, y, dx, dy);
        add(mx - 6, y - 10, mx - 6, y + 31);
        add(mx + 6, y - 10, mx + 6, y + 31);
        add(x - 10, (y + dy) / 2 - 2, nx - 10, (ny + HOLES[r + 1][c + 1][1]) / 2 - 2);
        add(x - 10, (y + dy) / 2 + 8, nx - 10, (ny + HOLES[r + 1][c + 1][1]) / 2 + 8);
      }
    } else if (r < rows - 1) {
      const [dx, dy] = HOLES[r + 1][c];
      add(x, y, dx, dy);
      add(x - 10, (y + dy) / 2 - 2, 472, (y + dy) / 2 - 5);
      add(x + 8, y - 15, 456, y + 26);
    }
    if (c === 0) {
      add(x, y, 249, y - 12);
      add(x, y, 249, y + 12);
      add(249, y + 12, 228, y + 16);
    }
    if (c === 4) {
      add(x, y, 472, y - 14);
      add(x, y, 456, y);
    }
    if (r === 0) { add(x, y, x, 524); add(x - 19, 524, x - 19, 545); }
    if (r === rows - 1) {
      add(x, y, x - 14, 860); add(x, y, x, 860); add(x, y, x + 14, 860); add(x - 8, y, x + 10, 860);
    }
  }));
  add(240, 820, 470, 782); add(252, 832, 466, 804);
  return L.join("");
})();

const ticks = Array.from({ length: 73 }, (_, i) => i);
const fx = i => 5 + i * 13.7;

const Ruler = () => (
  <svg width="998" height="20" viewBox="0 0 998 20">
    <rect width="998" height="20" fill="#2b2b2b" />
    {ticks.map(i => <path key={i} d={`M${fx(i)} 0v9`} stroke="#6b6b6b" />)}
    {ticks.map(i => i % 5 === 0 && i <= 70 && (
      <text key={i} x={fx(i)} y="16.500" textAnchor="middle" fontSize="7.800" fill="#a8a8a8" fontFamily="Liberation Sans">{i}</text>
    ))}
    <rect x="988.500" y="1" width="5" height="17" fill="#8a8420" />
  </svg>
);

/* ---------- data ---------- */
const TOOLS = [
  ["g", 0, 0, 3], ["i", "link", 21, 2], ["i", "unlink", 24], ["i", "bind", 24], ["s", 0, 0, 0],
  ["c", "All", 49, 3], ["i", "selObj", 20, 2, "blue"], ["i", "selName", 24, 1], ["i", "rect", 21], ["i", "win", 24], ["s", 0, 0, 1],
  ["i", "move", 22, 2], ["i", "rotate", 22, 1], ["i", "scale", 22, 2, null, 1], ["c", "View", 49], ["i", "pivot", 22, 0, null, 1], ["s", 0, 0, 3],
  ["i", "manip", 22, 2], ["i", "kb", 20, 2, "blue"], ["s", 0, 0, 3],
  ["i", "snap3", 22, 2, null, 1], ["i", "angle", 20, 2, "blue"], ["i", "pct", 22, 2], ["i", "spin", 22, 2], ["s", 0, 0, 3],
  ["i", "named", 20, 1], ["d", "Create Selection Se", 83, 3], ["s", 0, 0, 3],
  ["i", "mirror", 22, 2], ["s", 0, 0, 3], ["i", "align", 16, 0, null, 1], ["s", 0, 0, 5],
  ["i", "layers", 24], ["s", 0, 0, 2], ["i", "folder", 22, 1], ["i", "curve", 22, 1], ["i", "schem", 22, 1], ["s", 0, 0, 2],
  ["i", "mat", 26, 0, null, 1], ["s", 0, 0, 1], ["i", "rsetup", 22, 1], ["i", "potDark", 18, 3, "light"], ["i", "pot", 22, 3, null, 1],
];
const MENUS = [["Edit", 31], ["Tools", 38], ["Group", 40], ["Views", 39], ["Create", 38], ["Modifiers", 45], ["Animation", 50], ["Graph Editors", 64], ["Rendering", 56], ["Customize", 58], ["MAXScript", 57], ["Help", 30]];
const DICONS = ["ball", "dShape", "dLight", "dCam", "dHelper", "dWave", "dGroup", "dXref", "dBone", "dCont", "dFolderB", "dFrame"];

export default function App() {
  return (
    <Page>
      <Global />
      <AppFrame>
        <Logo>
          <svg width="24" height="22" viewBox="0 0 24 22">
            <ellipse cx="11" cy="11" rx="9" ry="8" fill="none" stroke="#eef" strokeWidth="1.800" />
            <path d="M15 8q-4-3-7 0 0 3 4 3t3 3q-3 2-7 0" fill="none" stroke="#fff" strokeWidth="2" />
            <path d="M20 13h4l-2 2.500z" fill="#111" />
          </svg>
        </Logo>
        <TitleBar>
          <Quick>
            <QSlot $w={16} $ml={4}><Ico n="qnew" s={13} /></QSlot>
            <QSlot $w={17}><Ico n="qopen" s={13} /></QSlot>
            <QSlot $w={17}><Ico n="qsave" s={13} /></QSlot>
            <QSlot $w={17}><Ico n="qundo" s={13} /></QSlot>
            <QDot />
            <QSlot $w={16}><Ico n="qredo" s={13} /></QSlot>
            <QDot />
            <QSlot $w={14} $ml={2}><Ico n="qproj" s={13} /></QSlot>
            <QDown />
          </Quick>
          <TitleMid>
            <Smudges>
              <Smudge $w={14} /><Smudge $w={16} /><Smudge $w={14} /><Smudge $w={12} /><Smudge $w={14} /><Smudge $w={26} /><Smudge $w={18} />
            </Smudges>
            <span>Autodesk 3ds Max&nbsp; 2012 x64</span>
            <TitleFile>iPhone_5c_Case_360.max</TitleFile>
          </TitleMid>
          <SearchZone>
            <Tri />
            <Search>Type a keyword or phrase</Search>
            <SIcon $w={14} $ml={2}><Ico n="bino" s={12} /></SIcon>
            <SIcon $w={18} $ml={1}><Ico n="wrench" s={12} /></SIcon>
            <SIcon $w={17}><Ico n="sat" s={12} /></SIcon>
            <SIcon $w={16}><Ico n="star" s={12} /></SIcon>
            <SIcon $w={14} $ml={12}><Ico n="help" s={13} /></SIcon>
            <QDot />
            <WinBtns>
              <WinBtn $w={25} $bg="linear-gradient(#7fd0f0, #2f8fd0)"><MinBar /></WinBtn>
              <WinBtn $w={18} $bg="linear-gradient(#a8bac8, #6f7f8c)"><MaxBox /></WinBtn>
              <WinBtn $w={33} $bg="linear-gradient(#d08a7c, #b02f22)">x</WinBtn>
            </WinBtns>
          </SearchZone>
        </TitleBar>
        <MenuBar>
          {MENUS.map(([t, w]) => <MenuItem key={t} $w={w}>{t}</MenuItem>)}
        </MenuBar>
        <ToolBar>
          <ToolInner>
            {TOOLS.map(([k, n, w, ml, on, corner], i) => {
              if (k === "g") return <Grip key={i} $ml={ml} />;
              if (k === "s") return <Sep key={i} $ml={ml} />;
              if (k === "c") return <Combo key={i} $w={w} $ml={ml}>{n}<ComboArrow /></Combo>;
              if (k === "d") return <Combo key={i} $w={w} $ml={ml} $dark>{n}<ComboArrow $dark /></Combo>;
              return (
                <Slot key={i} $w={w} $ml={ml} $on={on}>
                  <Ico n={n} />
                  {corner && <Corner><Ico n="tiny" s={4} /></Corner>}
                </Slot>
              );
            })}
          </ToolInner>
        </ToolBar>
        <Main>
          <Viewport>
            <Scene width="1070" height="600" viewBox="0 294 1070 600">
              <defs>
                <linearGradient id="body" x1="0" y1="0" x2="0" y2="1">
                  <stop offset="0" stopColor="#1c7fbb" />
                  <stop offset=".33" stopColor="#2488c6" />
                  <stop offset=".4" stopColor="#0f7abc" />
                  <stop offset=".45" stopColor="#1a80c2" />
                  <stop offset=".72" stopColor="#1f88cc" />
                  <stop offset=".92" stopColor="#2c97de" />
                  <stop offset="1" stopColor="#3098e0" />
                </linearGradient>
                <linearGradient id="edge" x1="0" y1="0" x2="1" y2="0">
                  <stop offset="0" stopColor="#0f4f7c" stopOpacity=".95" />
                  <stop offset=".6" stopColor="#14699f" stopOpacity=".5" />
                  <stop offset="1" stopColor="#14699f" stopOpacity="0" />
                </linearGradient>
                <radialGradient id="shine">
                  <stop offset="0" stopColor="#a8dcf5" />
                  <stop offset="1" stopColor="#3fa2e1" stopOpacity="0" />
                </radialGradient>
                <clipPath id="phone"><path d={OUTLINE} /></clipPath>
              </defs>
              <path d={OUTLINE} fill="url(#body)" />
              <g clipPath="url(#phone)">
                <path d={BAND} fill="#3fa2e2" />
                <rect x="227" y="398" width="23" height="450" fill="url(#edge)" />
                <path d="M227 800Q235 845 275 852L230 860z" fill="#0f4f7c" opacity=".8" />
                <path d="M472 790Q470 825 437 836L480 850z" fill="#16689c" opacity=".7" />
                <ellipse cx="258" cy="354" rx="9" ry="12" fill="url(#shine)" />
                <path d={mesh} fill="none" stroke="#7f8285" strokeWidth=".7" />
              </g>
              <path d={OUTLINE} fill="none" stroke="#7a7c7e" strokeWidth="1" />
              <polygon points={camPts} fill="#363636" stroke="#7f8183" strokeWidth="1.500" />
              <path d="M265 373L270 360" stroke="#5ad0e0" strokeWidth="1" />
              {HOLES.map((row, r) => row.map(([x, y], c) => (
                <polygon key={`${r}-${c}`} points={octa(x, y, RX[c], RY[c])} fill="#363636" stroke="#84878a" strokeWidth="1.300" />
              )))}
              <g fill="none" strokeWidth="1">
                <path d="M21 874V853" stroke="#3c5fc0" />
                <path d="M21 874L31 869" stroke="#3aa040" />
                <path d="M21 874L17 879" stroke="#b04040" />
              </g>
            </Scene>
            <VpLabel>[ + ] [ Perspective ] [ Shaded + Edged Faces ]</VpLabel>
            <Stats>
              <span /><span>Total</span>
              <span>Polys:</span><span>4 598</span>
              <span>Verts:</span><span>4 761</span>
              <StatGap />
              <span>FPS:</span><span>145,012</span>
            </Stats>
            <Dialog>
              <DTitle>Select From Scene<DClose>x</DClose></DTitle>
              <DBody>
                <DFrame>
                  <DMenu><span>Select</span><span>Display</span><span>Customize</span></DMenu>
                  <DToolRow>
                    <DToolLine>
                      {DICONS.map(n => <DBlue key={n}><Ico n={n} s={13} /></DBlue>)}
                      <DPlain $ml={4}><Ico n="page1" s={12} /></DPlain>
                      <DPlain $ml={1}><Ico n="page2" s={12} /></DPlain>
                      <DPlain $ml={1}><Ico n="page3" s={12} /></DPlain>
                      <Sep $ml={3} />
                      <DPlain $ml={1}><Ico n="funnel" s={13} /></DPlain>
                      <DPlain $ml={1}><Ico n="funnel2" s={13} /></DPlain>
                    </DToolLine>
                  </DToolRow>
                  <DFind>
                    <span>Find:</span>
                    <DInput $w={70} $ml={4} $edge="#b8d4e8" />
                    <Sep $ml={3} />
                    <DSetLabel>Selection Set:</DSetLabel>
                    <DInput $w={77} $ml={3} />
                    <DArrow />
                    <DPlain $ml={1}><Ico n="sel1" s={12} /></DPlain>
                    <DPlain $ml={1}><Ico n="sel1" s={12} /></DPlain>
                    <DPlain $ml={1}><Ico n="sel1" s={12} /></DPlain>
                    <Sep $ml={2} />
                    <DPlain $ml={1}><Ico n="ddSmall" s={12} /></DPlain>
                  </DFind>
                  <DHead>
                    <DName><span>Name</span><span>/</span></DName>
                    <DHeadEnd />
                  </DHead>
                  <DRow>
                    <Ico n="dGroup" s={9} />
                    <DRowSel>HeroObjectGroup</DRowSel>
                  </DRow>
                  <DFill />
                </DFrame>
                <DFoot><DBtn>OK</DBtn><DBtn>Cancel</DBtn></DFoot>
              </DBody>
            </Dialog>
          </Viewport>
          <Panel>
            <Tabs>
              <Tab $w={6}><Ico n="sun" s={11} /></Tab>
              <Tab $w={18} $ml={9}><Ico n="tCurve" s={15} /></Tab>
              <Tab $w={20} $ml={1}><Ico n="tTree" s={15} /></Tab>
              <Tab $w={20} $ml={3}><Ico n="tMotion" s={14} /></Tab>
              <Tab $w={16} $ml={1}><Ico n="tDisp" s={15} /></Tab>
              <Tab $w={24} $ml={1}><Ico n="tHammer" s={15} /></Tab>
            </Tabs>
            <NameRow><NameField /><Swatch /></NameRow>
            <ModList>Modifier List<ModBtn /></ModList>
            <Stack />
            <StackTools>
              <Tab $w={18}><Ico n="pin" s={13} /></Tab><Sep $ml={3} />
              <Tab $w={24}><Ico n="bars" s={13} /></Tab><Sep />
              <Tab $w={24}><Ico n="vee" s={13} /></Tab>
              <Tab $w={11}><Ico n="hand2" s={12} /></Tab><Sep $ml={8} />
              <Tab $w={24}><Ico n="cfg" s={13} /></Tab>
            </StackTools>
            <PanelRule />
          </Panel>
        </Main>
        <SliderRow>
          <Slider><SlideEnd>&lt;</SlideEnd><SlideMid>72 / 72</SlideMid><SlideEnd>&gt;</SlideEnd></Slider>
        </SliderRow>
        <RulerRow>
          <RulerIcon><Ico n="tl" s={13} /></RulerIcon>
          <Ruler />
        </RulerRow>
        <StatusRow>
          <MaxCol><Pink /><MaxScript>Max to Physc.</MaxScript></MaxCol>
          <StatusMain>
            <SLine>
              <Field $w={520}>None Selected</Field>
              <Coord $w={18}><Ico n="lock" s={11} /></Coord>
              <Coord $w={16} $ml={1}><Ico n="abs" s={11} /></Coord>
              <Coord $w={14}>X:</Coord><CoordInput />
              <Coord $w={17}>Y:</Coord><CoordInput />
              <Coord $w={17}>Z:</Coord><CoordInput />
            </SLine>
            <SLine>
              <Field $w={717}>Click or click-and-drag to select objects</Field>
              <BlueBtn><Ico n="timeTag" s={12} /></BlueBtn>
            </SLine>
          </StatusMain>
          <TimeCol><TimeCell>Grid = 10,0cm</TimeCell><TimeCell>Add Time Tag</TimeCell></TimeCol>
          <KeyBox><Ico n="key" s={17} /></KeyBox>
          <AutoCol><AutoBtn>Auto Key</AutoBtn><AutoBtn>Set Key</AutoBtn></AutoCol>
          <SelCol>
            <SelBox>Selected</SelBox>
            <FilterRow><Coord $w={14}><Ico n="keyRed" s={13} /></Coord><KeyFilters>Key Filters...</KeyFilters></FilterRow>
          </SelCol>
          <PlayCol>
            <PlayRow>
              <PSlot $w={18}><Ico n="pStart" s={11} /></PSlot>
              <PSlot $w={20}><Ico n="pPrev" s={11} /></PSlot>
              <PSlot $w={13}><Ico n="pPlay" s={11} /></PSlot>
              <PSlot $w={18}><Ico n="pNext" s={11} /></PSlot>
              <PSlot $w={20}><Ico n="pEnd" s={11} /></PSlot>
              <Sep $ml={2} />
              <PSlot $w={16}><Ico n="vZoom" s={11} /></PSlot>
              <PSlot $w={16}><Ico n="vGrid" s={11} /></PSlot>
              <PSlot $w={17}><Ico n="vZoomE" s={11} /></PSlot>
              <PSlot $w={17}><Ico n="vZoomA" s={11} /></PSlot>
            </PlayRow>
            <PlayRow>
              <PSlot $w={18}><Ico n="pStart" s={9} /></PSlot>
              <FrameInput>72</FrameInput>
              <Spin />
              <PSlot $w={18} $ml={2}><Ico n="vFrame" s={11} /></PSlot>
              <PSlot $w={15}><Ico n="vFov" s={11} /></PSlot>
              <PSlot $w={19}><Ico n="vHand" s={12} /></PSlot>
              <PSlot $w={13}><Ico n="vOrbit" s={12} /></PSlot>
              <PSlot $w={17}><Ico n="vMax" s={11} /></PSlot>
            </PlayRow>
          </PlayCol>
        </StatusRow>
        <Task>
          <TaskSeg $w={75} $ml={73} />
          <TaskSeg $w={76} $ml={34} />
          <TaskSeg $w={76} $ml={2} />
          <TaskSeg $w={76} $ml={1} />
          <TaskSeg $w={155} $ml={2} />
          <TaskSeg $w={78} $ml={1} />
          <TaskSeg $w={155} $ml={1} />
          <TaskSeg $w={77} $ml={2} />
          <TaskSeg $w={78} $ml={1} />
        </Task>
      </AppFrame>
    </Page>
  );
}
